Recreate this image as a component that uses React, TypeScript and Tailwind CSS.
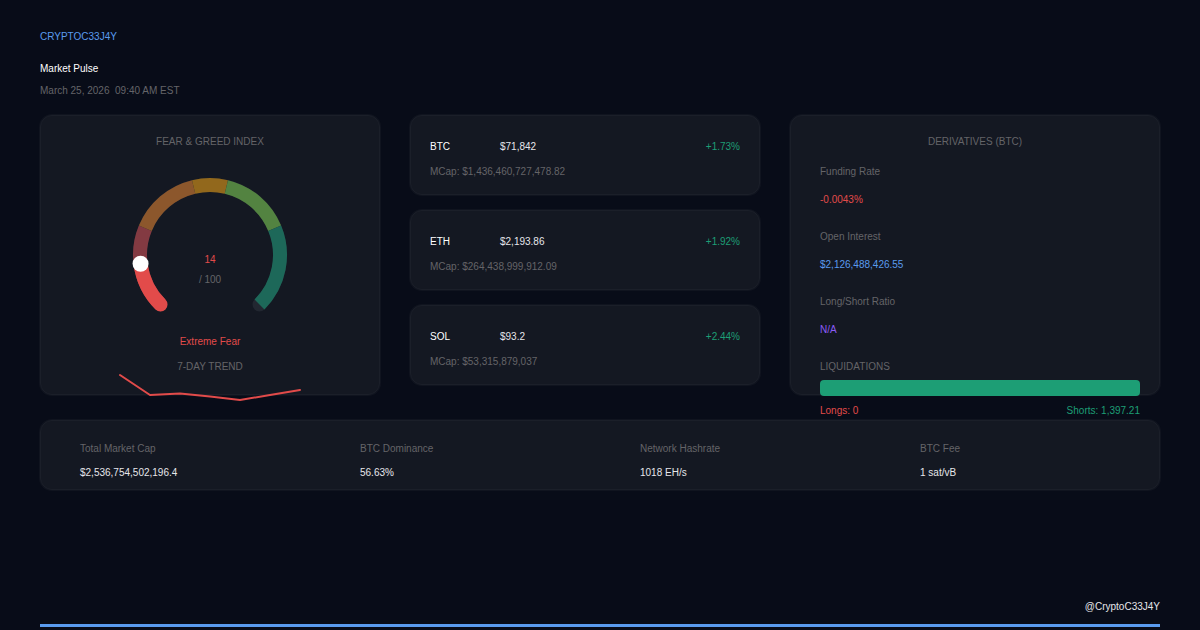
import React from "react";

type Asset = { symbol: string; price: string; change: string; cap: string };

const assets: Asset[] = [
  { symbol: "BTC", price: "$71,842", change: "+1.73%", cap: "$1,436,460,727,478.82" },
  { symbol: "ETH", price: "$2,193.86", change: "+1.92%", cap: "$264,438,999,912.09" },
  { symbol: "SOL", price: "$93.2", change: "+2.44%", cap: "$53,315,879,037" },
];

const derivatives = [
  { label: "Funding Rate", value: "-0.0043%", tone: "text-[#e24b4a]" },
  { label: "Open Interest", value: "$2,126,488,426.55", tone: "text-[#5a9bee]" },
  { label: "Long/Short Ratio", value: "N/A", tone: "text-[#8b5cf6]" },
];

const network = [
  { label: "Total Market Cap", value: "$2,536,754,502,196.4" },
  { label: "BTC Dominance", value: "56.63%" },
  { label: "Network Hashrate", value: "1018 EH/s" },
  { label: "BTC Fee", value: "1 sat/vB" },
];

const bands = [
  { from: 0, to: 25, color: "#833a42" },
  { from: 25, to: 45, color: "#8c572c" },
  { from: 45, to: 55, color: "#92681c" },
  { from: 55, to: 75, color: "#538341" },
  { from: 75, to: 100, color: "#1d6859" },
];

const RADIUS = 70;
const CENTER = 80;

function point(value: number) {
  const angle = ((135 + value * 2.7) * Math.PI) / 180;
  return { x: CENTER + RADIUS * Math.cos(angle), y: CENTER + RADIUS * Math.sin(angle) };
}

function arc(from: number, to: number) {
  const a = point(from);
  const b = point(to);
  const large = (to - from) * 2.7 > 180 ? 1 : 0;
  return `M${a.x} ${a.y}A${RADIUS} ${RADIUS} 0 ${large} 1 ${b.x} ${b.y}`;
}

function Gauge({ value }: { value: number }) {
  const knob = point(value);
  return (
    <div className="relative mx-auto mt-[25px] h-[150px] w-40">
      <svg viewBox="0 0 160 150" className="h-[150px] w-40" fill="none" strokeWidth={14} aria-hidden="true">
        <path d={arc(0, 100)} stroke="#222731" strokeLinecap="round" />
        {bands.map((b) => (
          <path key={b.from} d={arc(b.from, b.to)} stroke={b.color} />
        ))}
        <path d={arc(0, value)} stroke="#e24b4a" strokeLinecap="round" />
        <circle cx={knob.x} cy={knob.y} r={8} fill="#fff" />
      </svg>
      <div className="absolute inset-x-0 top-[77px] flex flex-col gap-1 text-center">
        <p className="text-[#e24b4a]">{value}</p>
        <p className="text-[#646468]">/ 100</p>
      </div>
    </div>
  );
}

function Card({ className, children }: { className: string; children: React.ReactNode }) {
  return (
    <section
      className={`rounded-xl border border-[#1b1f29] bg-[#141822] shadow-[0_0_0_1px_#10141f] ${className}`}
    >
      {children}
    </section>
  );
}

export default function App() {
  return (
    <div className="flex min-h-screen flex-col bg-[#080c18] px-10 pt-[29px] font-['Liberation_Sans',Arial,sans-serif] text-[10px] leading-4 text-[#e6e6ea]">
      <header>
        <p className="text-[#5a9bee]">CRYPTOC33J4Y</p>
        <h1 className="mt-4 text-white">Market Pulse</h1>
        <p className="mt-1.5 whitespace-pre text-[#646468]">{"March 25, 2026  09:40 AM EST"}</p>
      </header>

      <main className="mt-4 flex flex-col gap-[25px]">
        <div className="grid grid-cols-[340fr_350fr_370fr] items-start gap-[30px]">
          <Card className="h-70 pt-[18px] text-center">
            <h2 className="text-[#646468]">FEAR &amp; GREED INDEX</h2>
            <Gauge value={14} />
            <p className="mt-[9px] text-[#e24b4a]">Extreme Fear</p>
            <h3 className="mt-[9px] text-[#646468]">7-DAY TREND</h3>
            <svg
              viewBox="0 2 184 30"
              className="mx-auto h-[30px] w-46 overflow-visible"
              fill="none"
              role="img"
              aria-label="7-day trend"
            >
              <polyline
                points="2,2 32,22 62,20.5 92,23.5 122,27 152,22 182,17"
                stroke="#e24b4a"
                strokeWidth={2}
                strokeLinecap="round"
                strokeLinejoin="round"
              />
            </svg>
          </Card>

          <div className="flex flex-col gap-[15px]">
            {assets.map((a) => (
              <Card key={a.symbol} className="h-20 px-[19px] pt-[23px]">
                <div className="flex">
                  <h2 className="w-[70px] text-white">{a.symbol}</h2>
                  <p>{a.price}</p>
                  <p className="ml-auto text-[#1d9e75]">{a.change}</p>
                </div>
                <p className="mt-[9px] text-[#646468]">MCap: {a.cap}</p>
              </Card>
            ))}
          </div>

          <Card className="h-70 pt-[18px]">
            <h2 className="text-center text-[#646468]">DERIVATIVES (BTC)</h2>
            <div className="mr-[19px] ml-[29px]">
              <dl className="mt-3.5 flex flex-col gap-[21px]">
                {derivatives.map((d) => (
                  <div key={d.label} className="flex flex-col gap-3">
                    <dt className="text-[#646468]">{d.label}</dt>
                    <dd className={d.tone}>{d.value}</dd>
                  </div>
                ))}
              </dl>
              <h3 className="mt-[21px] text-[#646468]">LIQUIDATIONS</h3>
              <div className="mt-[5px] h-4 rounded-sm bg-[#1d9e75]" />
              <div className="mt-[7px] flex justify-between">
                <p className="text-[#e24b4a]">Longs: 0</p>
                <p className="text-[#1d9e75]">Shorts: 1,397.21</p>
              </div>
            </div>
          </Card>
        </div>

        <Card className="h-[70px] pt-5 pl-[39px]">
          <dl className="grid grid-cols-[280fr_280fr_280fr_239fr]">
            {network.map((n) => (
              <div key={n.label} className="flex flex-col gap-2">
                <dt className="text-[#646468]">{n.label}</dt>
                <dd>{n.value}</dd>
              </div>
            ))}
          </dl>
        </Card>
      </main>

      <footer className="mt-auto border-b-[3px] border-[#5a9bee] pb-[9px] text-right">@CryptoC33J4Y</footer>
      <div className="h-[3px]" />
    </div>
  );
}
